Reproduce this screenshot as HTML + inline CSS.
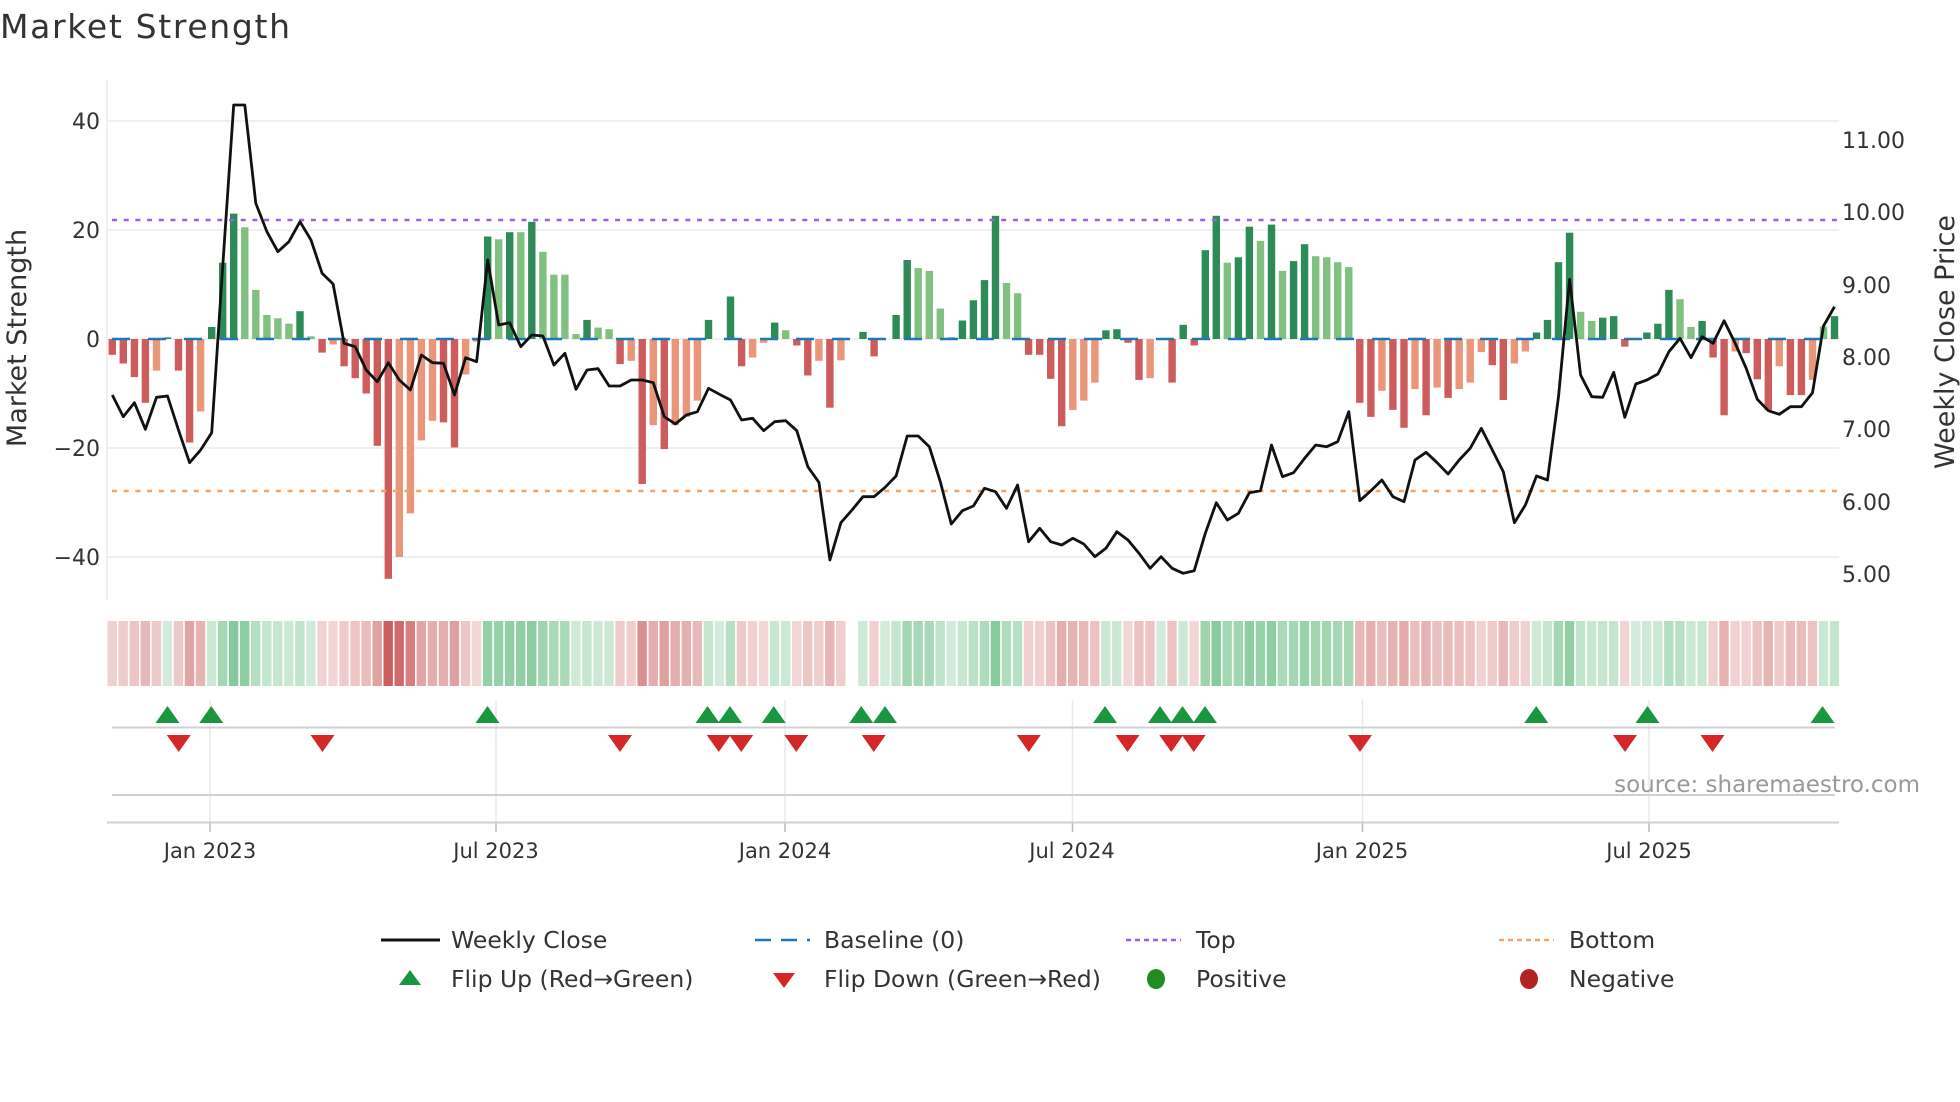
<!DOCTYPE html>
<html><head><meta charset="utf-8"><style>
html,body{margin:0;padding:0;background:#fff;width:1960px;height:1102px;overflow:hidden}
svg{display:block;font-family:"DejaVu Sans","Liberation Sans",sans-serif}
</style></head><body>
<svg id="s" width="1960" height="1102" viewBox="0 0 1960 1102" xmlns="http://www.w3.org/2000/svg">
<rect width="1960" height="1102" fill="#fff"/>
<text x="0" y="38" font-size="33" fill="#333" textLength="290">Market Strength</text>
<g id="g"></g>
<g font-size="22" fill="#333" text-anchor="end">
<text x="100" y="129">40</text><text x="100" y="238">20</text><text x="100" y="347">0</text>
<text x="100" y="456">−20</text><text x="100" y="565">−40</text>
</g>
<g font-size="22" fill="#333">
<text x="1842" y="148">11.00</text><text x="1842" y="220">10.00</text><text x="1842" y="293">9.00</text>
<text x="1842" y="365">8.00</text><text x="1842" y="437">7.00</text><text x="1842" y="510">6.00</text><text x="1842" y="582">5.00</text>
</g>
<text transform="translate(26,338) rotate(-90)" font-size="27" fill="#333" text-anchor="middle">Market Strength</text>
<text transform="translate(1954,342) rotate(-90)" font-size="27" fill="#333" text-anchor="middle">Weekly Close Price</text>
<g font-size="21" fill="#333" text-anchor="middle">
<text x="210" y="858">Jan 2023</text><text x="496" y="858">Jul 2023</text><text x="785" y="858">Jan 2024</text>
<text x="1072" y="858">Jul 2024</text><text x="1362" y="858">Jan 2025</text><text x="1649" y="858">Jul 2025</text>
</g>
<text x="1920" y="792" font-size="23" fill="#999" text-anchor="end">source: sharemaestro.com</text>
<g font-size="23.5" fill="#333">
<line x1="381" y1="940" x2="440" y2="940" stroke="#111" stroke-width="3"/>
<text x="451" y="948">Weekly Close</text>
<line x1="755" y1="940" x2="810" y2="940" stroke="#1f77b4" stroke-width="2.5" stroke-dasharray="16 10"/>
<text x="824" y="948">Baseline (0)</text>
<line x1="1126" y1="940" x2="1181" y2="940" stroke="#9b5fe0" stroke-width="2.5" stroke-dasharray="5 4"/>
<text x="1196" y="948">Top</text>
<line x1="1499" y1="940" x2="1554" y2="940" stroke="#f4a460" stroke-width="2.5" stroke-dasharray="5 4"/>
<text x="1569" y="948">Bottom</text>
<polygon points="410,970 399,985 421,985" fill="#1a9641"/>
<text x="451" y="987">Flip Up (Red→Green)</text>
<polygon points="773,973 795,973 784,988" fill="#d62728"/>
<text x="824" y="987">Flip Down (Green→Red)</text>
<ellipse cx="1156" cy="979" rx="9" ry="10" fill="#228b22"/>
<text x="1196" y="987">Positive</text>
<ellipse cx="1529" cy="979" rx="9" ry="10" fill="#b22222"/>
<text x="1569" y="987">Negative</text>
</g>
</svg>
<script>
var V=[-2.9,-4.5,-7,-11.7,-5.8,0.3,-5.8,-19,-13.3,2.2,14,23,20.5,9,4.4,3.8,2.8,5.1,0.5,-2.5,-1,-5,-7.2,-10,-19.6,-44,-40,-32,-18.6,-15,-15.3,-19.9,-6.5,-0.5,18.8,18.3,19.6,19.6,21.5,16,11.8,11.8,0.9,3.5,2.1,1.8,-4.6,-4,-26.6,-15.8,-20.2,-15.8,-14.3,-11.3,3.5,0,7.8,-5,-3.4,-0.7,3,1.6,-1.2,-6.7,-4,-12.6,-3.9,0,1.3,-3.2,0,4.4,14.5,13,12.5,5.6,0.3,3.4,7.1,10.8,22.6,10.3,8.4,-2.9,-2.9,-7.3,-16,-13,-11.3,-8,1.6,1.8,-0.7,-7.5,-7.2,0,-8,2.6,-1.2,16.3,22.6,14,15,20.6,18,21,12.5,14.3,17.4,15.2,15,14.1,13.2,-11.7,-14.3,-9.5,-13,-16.3,-9.2,-14,-8.9,-10.8,-9.2,-8,-2.4,-4.8,-11.2,-4.5,-2.3,1.2,3.5,14.1,19.5,5,3.3,3.9,4.2,-1.4,0,1.2,2.8,9,7.3,2.2,3.3,-3.4,-14,-2.3,-2.6,-7.4,-13,-5,-10.3,-10.3,-7.5,2.3,4.2];
var T=("ddddl dddld ddlll lldld ldddd dllll ddlld ldldl llldl ldldl dllld xddll dlddl dlxdd xddll ldddd dlldd ddlll ddddl xdddd dlddl dlddl llldd lddld ldlll ddlld dddll dddxd ddlld ddldd dlddl ld").replace(/ /g,'').split('');
var P=[945,1010,968,1048,952,948,1050,1148,1110,1058,560,75,75,370,455,515,485,425,480,580,612,790,800,870,905,848,900,930,825,848,850,945,833,845,540,735,728,800,765,768,855,820,928,870,866,918,918,900,900,908,1010,1032,1005,995,925,943,960,1020,1015,1052,1025,1022,1052,1160,1207,1440,1328,1290,1250,1250,1222,1188,1068,1068,1100,1205,1332,1292,1278,1225,1235,1285,1215,1385,1345,1385,1395,1375,1392,1430,1405,1355,1380,1420,1465,1430,1465,1480,1472,1360,1268,1320,1300,1238,1232,1095,1190,1178,1135,1095,1100,1085,995,1262,1232,1200,1250,1265,1140,1117,1148,1182,1140,1105,1045,1110,1175,1328,1275,1188,1200,950,598,885,950,952,877,1012,912,900,882,815,775,833,770,790,722,790,865,958,992,1003,980,980,938,738,680];
var h='';
function X(i){return 112.3+11.04*i;}
var z=339,u=5.45;
[121,230,339,448,557].forEach(function(y){h+='<line x1="107" y1="'+y+'" x2="1839" y2="'+y+'" stroke="#eef0f3" stroke-width="2"/>';});
h+='<line x1="107" y1="80" x2="107" y2="600" stroke="#ececec" stroke-width="1.5"/>';
[210,496,785,1072.5,1362.5,1649].forEach(function(x){h+='<line x1="'+x+'" y1="700" x2="'+x+'" y2="822" stroke="#e6e8ec" stroke-width="1.5"/><line x1="'+x+'" y1="822" x2="'+x+'" y2="832" stroke="#bbb" stroke-width="1.5"/>';});
for(var i=0;i<V.length;i++){
 var v=V[i],t=T[i]||'d',x=X(i);
 var col=v>=0?(t=='l'?'#80c080':'#2e8b57'):(t=='l'?'#e9967a':'#cd5c5c');
 var hh=Math.abs(v)*u;
 if(hh>0.1){h+='<rect x="'+(x-3.7).toFixed(1)+'" y="'+(v>=0?z-hh:z).toFixed(1)+'" width="7.4" height="'+hh.toFixed(1)+'" fill="'+col+'"/>';}
 if(i!=67){
  var a=0.22+0.7*Math.min(1,Math.abs(v)/44);
  var sc=v>=0?'rgb(50,165,85)':'rgb(200,80,80)';
  h+='<rect x="'+(x-4.8).toFixed(1)+'" y="621" width="9.4" height="65" fill="'+sc+'" fill-opacity="'+a.toFixed(2)+'"/>';
 }
}
h+='<line x1="112" y1="339" x2="1839" y2="339" stroke="#1f77b4" stroke-width="2.5" stroke-dasharray="18 18"/>';
h+='<line x1="112" y1="220" x2="1839" y2="220" stroke="#9b5fe0" stroke-width="2.5" stroke-dasharray="5 6.7"/>';
h+='<line x1="112" y1="491" x2="1839" y2="491" stroke="#f4a460" stroke-width="2.5" stroke-dasharray="5 6.7"/>';
var pts=[];for(var i=0;i<P.length;i++){pts.push(X(i).toFixed(1)+','+(80+P[i]/3).toFixed(1));}
h+='<polyline points="'+pts.join(' ')+'" fill="none" stroke="#111" stroke-width="2.8" stroke-linejoin="round"/>';
h+='<line x1="112" y1="727.5" x2="1835" y2="727.5" stroke="#d0d0d0" stroke-width="2"/>';
h+='<line x1="112" y1="795" x2="1835" y2="795" stroke="#d0d0d0" stroke-width="2"/>';
h+='<line x1="107" y1="822.5" x2="1839" y2="822.5" stroke="#d0d0d0" stroke-width="2"/>';
var up=[134,169,390,566,584,619,689,708,884,928,946,964,1229,1318,1458];
var dn=[143,258,496,575,593,637,699,823,902,937,955,1088,1300,1370];
up.forEach(function(d){var x=d*1.25;h+='<polygon points="'+x+',706 '+(x-12)+',723 '+(x+12)+',723" fill="#1a9641"/>';});
dn.forEach(function(d){var x=d*1.25;h+='<polygon points="'+(x-12)+',735 '+(x+12)+',735 '+x+',752" fill="#d62728"/>';});
document.getElementById('g').innerHTML=h;
</script>
</body></html>
